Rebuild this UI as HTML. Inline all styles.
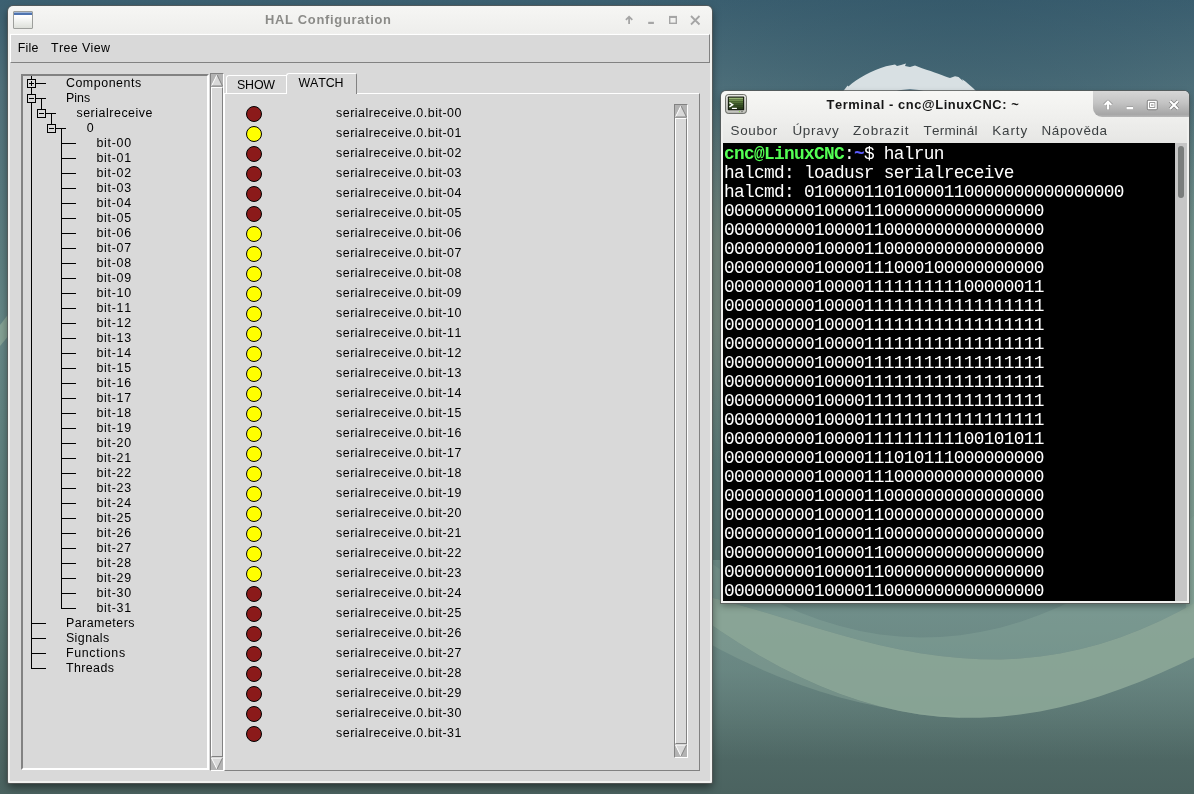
<!DOCTYPE html><html><head><meta charset="utf-8"><title>HAL</title><style>
*{box-sizing:border-box;margin:0;padding:0}
html,body{width:1194px;height:794px;overflow:hidden;background:#4a6a72}
body{position:relative;font-family:"Liberation Sans",sans-serif;}
.abs{position:absolute}
#bg{position:absolute;left:0;top:0}
#hal{position:absolute;left:8px;top:6px;width:704px;height:777px;background:linear-gradient(#f6f6f4,#eeeeec 27px,#f1f1ef 28px);border-radius:5px 5px 1px 1px;box-shadow:0 0 0 1px rgba(88,90,88,.78),0 4px 9px 0 rgba(0,0,0,.5)}
#halc{position:absolute;left:2px;top:28px;width:700px;height:747px;background:#d9d9d9}
.t{position:absolute;white-space:pre;color:#000;font-size:12.4px;letter-spacing:.55px;line-height:15px;height:15px}
.tx{position:absolute;white-space:pre;line-height:20px;height:20px;font-kerning:none}
#hal,#term{will-change:transform}
.hl{position:absolute;height:1px;background:#000}
.vl{position:absolute;width:1px;background:#000}
.bx{position:absolute;width:9px;height:9px;border:1px solid #000;background:#d9d9d9}
.bx i{position:absolute;left:1px;top:3px;width:5px;height:1px;background:#000}
.bx b{position:absolute;left:3px;top:1px;width:1px;height:5px;background:#000}
.c{position:absolute;width:16px;height:16px;border-radius:50%;border:1.6px solid #000}
.r{background:#8b1a1a}.y{background:#ffff00}
#term{position:absolute;left:721px;top:91px;width:468px;height:512px;background:linear-gradient(#f7f7f5,#efefed 27px,#f1f1ef 28px);border-radius:5px 5px 0 0;box-shadow:0 0 0 1px rgba(88,90,88,.78),0 3px 7px 0 rgba(0,0,0,.35)}
#tt{position:absolute;left:2px;top:52px;width:452px;height:458px;background:#000;overflow:hidden}
.ln{position:absolute;left:1px;white-space:pre;color:#fff;font-family:"Liberation Mono",monospace;font-size:17.8px;letter-spacing:-.68px;line-height:19px;height:19px}
.g{color:#54ff54;font-weight:bold}.bl{color:#5c5cff;font-weight:bold}
.m{position:absolute;top:31px;white-space:pre;color:#3c3c3c;font-size:13.6px;letter-spacing:.45px;line-height:16px}
</style></head><body>
<svg id="bg" width="1194" height="794" viewBox="0 0 1194 794"><defs><linearGradient id="g0" x1="0" y1="0" x2="0" y2="1"><stop offset="0" stop-color="#3c6071"/><stop offset=".11" stop-color="#51727c"/><stop offset=".33" stop-color="#5d8081"/><stop offset=".42" stop-color="#668887"/><stop offset=".52" stop-color="#628482"/><stop offset=".76" stop-color="#5b7975"/><stop offset="1" stop-color="#4b6360"/></linearGradient><linearGradient id="g2" x1="0" y1="0" x2="0" y2="1"><stop offset="0" stop-color="#7f8f82" stop-opacity="0"/><stop offset=".4" stop-color="#7f8f82" stop-opacity=".8"/><stop offset=".62" stop-color="#7f8f82" stop-opacity=".8"/><stop offset="1" stop-color="#7f8f82" stop-opacity="0"/></linearGradient><linearGradient id="g4" x1="0" y1="0" x2="0" y2="1"><stop offset="0" stop-color="#86a396" stop-opacity="0"/><stop offset=".3" stop-color="#86a396" stop-opacity=".6"/><stop offset="1" stop-color="#86a396" stop-opacity=".85"/></linearGradient><linearGradient id="g3" x1="0" y1="0" x2="0" y2="1"><stop offset="0" stop-color="#7c9b96" stop-opacity=".75"/><stop offset=".55" stop-color="#7c9b96" stop-opacity=".5"/><stop offset="1" stop-color="#7c9b96" stop-opacity="0"/></linearGradient><radialGradient id="g1" cx="960" cy="-30" r="340" gradientUnits="userSpaceOnUse"><stop offset="0" stop-color="#2f5365" stop-opacity=".5"/><stop offset=".5" stop-color="#2f5365" stop-opacity=".28"/><stop offset="1" stop-color="#2f5365" stop-opacity="0"/></radialGradient></defs><rect width="1194" height="794" fill="url(#g0)"/><rect width="1194" height="420" fill="url(#g1)"/><rect x="712" y="100" width="10" height="360" fill="url(#g2)"/><rect x="712" y="560" width="482" height="200" fill="url(#g3)"/><rect x="1186" y="90" width="8" height="520" fill="url(#g4)"/>
<path d="M842.6 92 L847.6 85.6 L848.4 86.4 C858 78 872 70.5 886 66.2 L895 64.6 L897 66 L901 65 L906 63.6 L905 66 L910 67 L915 65.6 L922 68.2 C934 72 944 76 950 78 L955 76.2 L958.5 77 L963 81 L962 79 C967 82.5 972 87 977 92 Z" fill="#d8e0e3"/><path d="M892 92 Q910 86.5 928 92 Z" fill="#44687a"/>
<path d="M560.0 591.4 L580.0 587.1 L600.0 584.7 L620.0 584.1 L640.0 585.0 L660.0 587.2 L680.0 590.6 L700.0 594.8 L720.0 599.7 L740.0 605.2 L760.0 611.0 L780.0 617.0 L800.0 623.1 L820.0 629.1 L840.0 634.8 L860.0 640.2 L880.0 645.2 L900.0 649.5 L920.0 653.2 L940.0 656.1 L960.0 658.1 L980.0 659.3 L1000.0 659.4 L1020.0 658.6 L1040.0 656.6 L1060.0 653.5 L1080.0 649.3 L1100.0 644.0 L1120.0 637.5 L1140.0 629.8 L1160.0 621.0 L1180.0 611.1 L1200.0 600.0 L1220.0 587.9 L1240.0 574.8 L1240.0 471.1 L1220.0 491.4 L1200.0 510.4 L1180.0 528.1 L1160.0 544.5 L1140.0 559.5 L1120.0 573.2 L1100.0 585.6 L1080.0 596.7 L1060.0 606.4 L1040.0 614.8 L1020.0 621.9 L1000.0 627.7 L980.0 632.1 L960.0 635.2 L940.0 637.0 L920.0 637.5 L900.0 636.6 L880.0 634.5 L860.0 631.0 L840.0 626.1 L820.0 620.0 L800.0 612.5 L780.0 603.7 L760.0 593.6 L740.0 582.1 L720.0 569.3 L700.0 555.3 L680.0 539.8 L660.0 523.1 L640.0 505.0 L620.0 485.6 L600.0 464.9 L580.0 442.8 L560.0 419.5 Z" fill="#86a399" opacity=".45"/>
<path d="M560.0 539.2 L580.0 555.9 L600.0 571.7 L620.0 586.8 L640.0 601.0 L660.0 614.4 L680.0 626.9 L700.0 638.6 L720.0 649.5 L740.0 659.6 L760.0 668.8 L780.0 677.2 L800.0 684.8 L820.0 691.5 L840.0 697.5 L860.0 702.5 L880.0 706.8 L900.0 710.2 L920.0 712.8 L940.0 714.6 L960.0 715.5 L960.0 717.8 L940.0 716.7 L920.0 714.4 L900.0 711.0 L880.0 706.5 L860.0 700.8 L840.0 694.0 L820.0 686.1 L800.0 677.1 L780.0 667.0 L760.0 655.9 L740.0 643.8 L720.0 630.7 L700.0 616.7 L680.0 601.8 L660.0 586.1 L640.0 569.7 L620.0 552.6 L600.0 534.9 L580.0 516.6 L560.0 497.9 Z" fill="#86a295" opacity=".5"/>
<path d="M560.0 497.9 L580.0 516.6 L600.0 534.9 L620.0 552.6 L640.0 569.7 L660.0 586.1 L680.0 601.8 L700.0 616.7 L720.0 630.7 L740.0 643.8 L760.0 655.9 L780.0 667.0 L800.0 677.1 L820.0 686.1 L840.0 694.0 L860.0 700.8 L880.0 706.5 L900.0 711.0 L920.0 714.4 L940.0 716.7 L960.0 717.8 L980.0 717.8 L1000.0 716.8 L1020.0 714.6 L1040.0 711.5 L1060.0 707.3 L1080.0 702.2 L1100.0 696.2 L1120.0 689.3 L1140.0 681.7 L1160.0 673.3 L1180.0 664.2 L1200.0 654.6 L1220.0 644.4 L1240.0 633.9 L1240.0 574.8 L1220.0 587.9 L1200.0 600.0 L1180.0 611.1 L1160.0 621.0 L1140.0 629.8 L1120.0 637.5 L1100.0 644.0 L1080.0 649.3 L1060.0 653.5 L1040.0 656.6 L1020.0 658.6 L1000.0 659.4 L980.0 659.3 L960.0 658.1 L940.0 656.1 L920.0 653.2 L900.0 649.5 L880.0 645.2 L860.0 640.2 L840.0 634.8 L820.0 629.1 L800.0 623.1 L780.0 617.0 L760.0 611.0 L740.0 605.2 L720.0 599.7 L700.0 594.8 L680.0 590.6 L660.0 587.2 L640.0 585.0 L620.0 584.1 L600.0 584.7 L580.0 587.1 L560.0 591.4 Z" fill="#8ba697" opacity=".92"/>
<path d="M0 325 L10 312 L10 334 L0 346 Z" fill="#8ba898" opacity=".85"/>
</svg>
<div id="hal">
<div class="abs" style="left:5px;top:5px;width:20px;height:18px;border:1px solid #9d9f9c;border-radius:1px;background:linear-gradient(#fff 25%,#dde0da)"><div class="abs" style="left:0;top:0;width:18px;height:3px;background:linear-gradient(#9db4d6 0,#9db4d6 30%,#4f74b0 35%,#4f74b0)"></div></div>
<div class="tx" style="left:256.9px;top:3.53px;font-size:12.9px;letter-spacing:0.717px;color:#8b8b88;font-weight:bold;">HAL Configuration</div>
<svg class="abs" style="left:612px;top:6px" width="86" height="16" viewBox="0 0 86 16">
<g stroke="#a5a5a5" stroke-width="1.8" fill="none">
<path d="M9.1 12V5M5.9 7.9L9.1 4.7L12.3 7.9"/>
<path d="M28.2 10.9h5.7" stroke-width="2.2"/>
<rect x="49.7" y="5" width="6.6" height="6.3" stroke-width="1.4"/><path d="M49 4.9h8" stroke-width="2"/>
<path d="M71 4l8.5 8.5M79.5 4L71 12.5"/>
</g></svg>
<div id="halc">
<div class="abs" style="left:0;top:0;width:700px;height:29px;border-right:1px solid #828282;border-bottom:1px solid #828282;border-left:1px solid #fff;border-top:1px solid #fff"></div>
<div class="tx" style="left:7.8px;top:3.70px;font-size:12.42px;letter-spacing:0.235px;color:#000;">File</div>
<div class="tx" style="left:40.9px;top:3.70px;font-size:12.42px;letter-spacing:0.409px;color:#000;">Tree View</div>
<div class="abs" style="left:11px;top:40px;width:188px;height:696px;border:2px solid;border-color:#828282 #ffffff #ffffff #828282"></div>
<div class="vl" style="left:21px;top:42px;height:593px"></div>
<div class="vl" style="left:31px;top:64px;height:15px"></div>
<div class="vl" style="left:41px;top:79px;height:15px"></div>
<div class="vl" style="left:51px;top:94px;height:481px"></div>
<div class="hl" style="left:21px;top:49px;width:15px"></div>
<div class="bx" style="left:17px;top:45px"><i></i><b></b></div>
<div class="tx" style="left:55.9px;top:38.70px;font-size:12.42px;letter-spacing:0.55px;color:#000;">Components</div>
<div class="hl" style="left:21px;top:64px;width:15px"></div>
<div class="bx" style="left:17px;top:60px"><i></i></div>
<div class="tx" style="left:55.9px;top:53.70px;font-size:12.42px;letter-spacing:0.069px;color:#000;">Pins</div>
<div class="hl" style="left:31px;top:79px;width:15px"></div>
<div class="bx" style="left:27px;top:75px"><i></i></div>
<div class="tx" style="left:66.4px;top:68.70px;font-size:12.42px;letter-spacing:0.539px;color:#000;">serialreceive</div>
<div class="hl" style="left:41px;top:94px;width:15px"></div>
<div class="bx" style="left:37px;top:90px"><i></i></div>
<div class="tx" style="left:76.8px;top:83.70px;font-size:12.42px;letter-spacing:0.732px;color:#000;">0</div>
<div class="hl" style="left:51px;top:109px;width:15px"></div>
<div class="tx" style="left:86.5px;top:98.70px;font-size:12.42px;letter-spacing:0.699px;color:#000;">bit-00</div>
<div class="hl" style="left:51px;top:124px;width:15px"></div>
<div class="tx" style="left:86.5px;top:113.70px;font-size:12.42px;letter-spacing:0.699px;color:#000;">bit-01</div>
<div class="hl" style="left:51px;top:139px;width:15px"></div>
<div class="tx" style="left:86.5px;top:128.70px;font-size:12.42px;letter-spacing:0.699px;color:#000;">bit-02</div>
<div class="hl" style="left:51px;top:154px;width:15px"></div>
<div class="tx" style="left:86.5px;top:143.70px;font-size:12.42px;letter-spacing:0.699px;color:#000;">bit-03</div>
<div class="hl" style="left:51px;top:169px;width:15px"></div>
<div class="tx" style="left:86.5px;top:158.70px;font-size:12.42px;letter-spacing:0.699px;color:#000;">bit-04</div>
<div class="hl" style="left:51px;top:184px;width:15px"></div>
<div class="tx" style="left:86.5px;top:173.70px;font-size:12.42px;letter-spacing:0.699px;color:#000;">bit-05</div>
<div class="hl" style="left:51px;top:199px;width:15px"></div>
<div class="tx" style="left:86.5px;top:188.70px;font-size:12.42px;letter-spacing:0.699px;color:#000;">bit-06</div>
<div class="hl" style="left:51px;top:214px;width:15px"></div>
<div class="tx" style="left:86.5px;top:203.70px;font-size:12.42px;letter-spacing:0.699px;color:#000;">bit-07</div>
<div class="hl" style="left:51px;top:229px;width:15px"></div>
<div class="tx" style="left:86.5px;top:218.70px;font-size:12.42px;letter-spacing:0.699px;color:#000;">bit-08</div>
<div class="hl" style="left:51px;top:244px;width:15px"></div>
<div class="tx" style="left:86.5px;top:233.70px;font-size:12.42px;letter-spacing:0.699px;color:#000;">bit-09</div>
<div class="hl" style="left:51px;top:259px;width:15px"></div>
<div class="tx" style="left:86.5px;top:248.70px;font-size:12.42px;letter-spacing:0.699px;color:#000;">bit-10</div>
<div class="hl" style="left:51px;top:274px;width:15px"></div>
<div class="tx" style="left:86.5px;top:263.70px;font-size:12.42px;letter-spacing:0.699px;color:#000;">bit-11</div>
<div class="hl" style="left:51px;top:289px;width:15px"></div>
<div class="tx" style="left:86.5px;top:278.70px;font-size:12.42px;letter-spacing:0.699px;color:#000;">bit-12</div>
<div class="hl" style="left:51px;top:304px;width:15px"></div>
<div class="tx" style="left:86.5px;top:293.70px;font-size:12.42px;letter-spacing:0.699px;color:#000;">bit-13</div>
<div class="hl" style="left:51px;top:319px;width:15px"></div>
<div class="tx" style="left:86.5px;top:308.70px;font-size:12.42px;letter-spacing:0.699px;color:#000;">bit-14</div>
<div class="hl" style="left:51px;top:334px;width:15px"></div>
<div class="tx" style="left:86.5px;top:323.70px;font-size:12.42px;letter-spacing:0.699px;color:#000;">bit-15</div>
<div class="hl" style="left:51px;top:349px;width:15px"></div>
<div class="tx" style="left:86.5px;top:338.70px;font-size:12.42px;letter-spacing:0.699px;color:#000;">bit-16</div>
<div class="hl" style="left:51px;top:364px;width:15px"></div>
<div class="tx" style="left:86.5px;top:353.70px;font-size:12.42px;letter-spacing:0.699px;color:#000;">bit-17</div>
<div class="hl" style="left:51px;top:379px;width:15px"></div>
<div class="tx" style="left:86.5px;top:368.70px;font-size:12.42px;letter-spacing:0.699px;color:#000;">bit-18</div>
<div class="hl" style="left:51px;top:394px;width:15px"></div>
<div class="tx" style="left:86.5px;top:383.70px;font-size:12.42px;letter-spacing:0.699px;color:#000;">bit-19</div>
<div class="hl" style="left:51px;top:409px;width:15px"></div>
<div class="tx" style="left:86.5px;top:398.70px;font-size:12.42px;letter-spacing:0.699px;color:#000;">bit-20</div>
<div class="hl" style="left:51px;top:424px;width:15px"></div>
<div class="tx" style="left:86.5px;top:413.70px;font-size:12.42px;letter-spacing:0.699px;color:#000;">bit-21</div>
<div class="hl" style="left:51px;top:439px;width:15px"></div>
<div class="tx" style="left:86.5px;top:428.70px;font-size:12.42px;letter-spacing:0.699px;color:#000;">bit-22</div>
<div class="hl" style="left:51px;top:454px;width:15px"></div>
<div class="tx" style="left:86.5px;top:443.70px;font-size:12.42px;letter-spacing:0.699px;color:#000;">bit-23</div>
<div class="hl" style="left:51px;top:469px;width:15px"></div>
<div class="tx" style="left:86.5px;top:458.70px;font-size:12.42px;letter-spacing:0.699px;color:#000;">bit-24</div>
<div class="hl" style="left:51px;top:484px;width:15px"></div>
<div class="tx" style="left:86.5px;top:473.70px;font-size:12.42px;letter-spacing:0.699px;color:#000;">bit-25</div>
<div class="hl" style="left:51px;top:499px;width:15px"></div>
<div class="tx" style="left:86.5px;top:488.70px;font-size:12.42px;letter-spacing:0.699px;color:#000;">bit-26</div>
<div class="hl" style="left:51px;top:514px;width:15px"></div>
<div class="tx" style="left:86.5px;top:503.70px;font-size:12.42px;letter-spacing:0.699px;color:#000;">bit-27</div>
<div class="hl" style="left:51px;top:529px;width:15px"></div>
<div class="tx" style="left:86.5px;top:518.70px;font-size:12.42px;letter-spacing:0.699px;color:#000;">bit-28</div>
<div class="hl" style="left:51px;top:544px;width:15px"></div>
<div class="tx" style="left:86.5px;top:533.70px;font-size:12.42px;letter-spacing:0.699px;color:#000;">bit-29</div>
<div class="hl" style="left:51px;top:559px;width:15px"></div>
<div class="tx" style="left:86.5px;top:548.70px;font-size:12.42px;letter-spacing:0.699px;color:#000;">bit-30</div>
<div class="hl" style="left:51px;top:574px;width:15px"></div>
<div class="tx" style="left:86.5px;top:563.70px;font-size:12.42px;letter-spacing:0.699px;color:#000;">bit-31</div>
<div class="hl" style="left:21px;top:589px;width:15px"></div>
<div class="tx" style="left:55.9px;top:578.70px;font-size:12.42px;letter-spacing:0.504px;color:#000;">Parameters</div>
<div class="hl" style="left:21px;top:604px;width:15px"></div>
<div class="tx" style="left:55.9px;top:593.70px;font-size:12.42px;letter-spacing:0.441px;color:#000;">Signals</div>
<div class="hl" style="left:21px;top:619px;width:15px"></div>
<div class="tx" style="left:55.9px;top:608.70px;font-size:12.42px;letter-spacing:0.679px;color:#000;">Functions</div>
<div class="hl" style="left:21px;top:634px;width:15px"></div>
<div class="tx" style="left:55.9px;top:623.70px;font-size:12.42px;letter-spacing:0.417px;color:#000;">Threads</div>
<div class="abs" style="left:200px;top:39px;width:14px;height:698px;background:#b3b3b3;border:1px solid;border-color:#828282 #ffffff #ffffff #828282"><div class="abs" style="left:0;top:13px;width:12px;height:670px;background:#d9d9d9;border:1px solid;border-color:#ffffff #828282 #828282 #ffffff"></div><svg class="abs" style="left:0;top:0" width="12" height="13" viewBox="0 0 12 13"><path d="M6 0.5L11.5 12H0.5Z" fill="#d9d9d9"/><path d="M6 0.8L0.5 12" stroke="#fff" stroke-width="1" fill="none"/><path d="M6 0.8L11.5 12H0.5" stroke="#828282" stroke-width="1" fill="none"/></svg><svg class="abs" style="left:0;bottom:0" width="12" height="13" viewBox="0 0 12 13"><path d="M6 12.5L11.5 1H0.5Z" fill="#d9d9d9"/><path d="M6 12.2L0.5 1H11.5" stroke="#fff" stroke-width="1" fill="none"/><path d="M6 12.2L11.5 1" stroke="#828282" stroke-width="1" fill="none"/></svg></div>
<div class="abs" style="left:664px;top:70px;width:14px;height:654px;background:#b3b3b3;border:1px solid;border-color:#828282 #ffffff #ffffff #828282"><div class="abs" style="left:0;top:13px;width:12px;height:626px;background:#d9d9d9;border:1px solid;border-color:#ffffff #828282 #828282 #ffffff"></div><svg class="abs" style="left:0;top:0" width="12" height="13" viewBox="0 0 12 13"><path d="M6 0.5L11.5 12H0.5Z" fill="#d9d9d9"/><path d="M6 0.8L0.5 12" stroke="#fff" stroke-width="1" fill="none"/><path d="M6 0.8L11.5 12H0.5" stroke="#828282" stroke-width="1" fill="none"/></svg><svg class="abs" style="left:0;bottom:0" width="12" height="13" viewBox="0 0 12 13"><path d="M6 12.5L11.5 1H0.5Z" fill="#d9d9d9"/><path d="M6 12.2L0.5 1H11.5" stroke="#fff" stroke-width="1" fill="none"/><path d="M6 12.2L11.5 1" stroke="#828282" stroke-width="1" fill="none"/></svg></div>
<div class="abs" style="left:214px;top:59px;width:476px;height:678px;border:1px solid;border-color:#ffffff #828282 #828282 #ffffff"></div>
<div class="abs" style="left:216px;top:41px;width:61px;height:18px;border:1px solid #fff;border-bottom:none;border-right:none;border-radius:3px 0 0 0"></div>
<div class="abs" style="left:276px;top:39px;width:71px;height:21px;background:#d9d9d9;border:1px solid;border-color:#fff #828282 #d9d9d9 #fff;border-bottom:none;border-right-width:1px;border-radius:3px 2px 0 0"></div>
<div class="tx" style="left:227.0px;top:40.70px;font-size:12.42px;letter-spacing:-0.171px;color:#000;">SHOW</div>
<div class="tx" style="left:288.5px;top:38.70px;font-size:12.42px;letter-spacing:-0.144px;color:#000;">WATCH</div>
<div class="c r" style="left:236px;top:72px"></div>
<div class="tx" style="left:326.0px;top:68.70px;font-size:12.42px;letter-spacing:0.52px;color:#000;">serialreceive.0.bit-00</div>
<div class="c y" style="left:236px;top:92px"></div>
<div class="tx" style="left:326.0px;top:88.70px;font-size:12.42px;letter-spacing:0.52px;color:#000;">serialreceive.0.bit-01</div>
<div class="c r" style="left:236px;top:112px"></div>
<div class="tx" style="left:326.0px;top:108.70px;font-size:12.42px;letter-spacing:0.52px;color:#000;">serialreceive.0.bit-02</div>
<div class="c r" style="left:236px;top:132px"></div>
<div class="tx" style="left:326.0px;top:128.70px;font-size:12.42px;letter-spacing:0.52px;color:#000;">serialreceive.0.bit-03</div>
<div class="c r" style="left:236px;top:152px"></div>
<div class="tx" style="left:326.0px;top:148.70px;font-size:12.42px;letter-spacing:0.52px;color:#000;">serialreceive.0.bit-04</div>
<div class="c r" style="left:236px;top:172px"></div>
<div class="tx" style="left:326.0px;top:168.70px;font-size:12.42px;letter-spacing:0.52px;color:#000;">serialreceive.0.bit-05</div>
<div class="c y" style="left:236px;top:192px"></div>
<div class="tx" style="left:326.0px;top:188.70px;font-size:12.42px;letter-spacing:0.52px;color:#000;">serialreceive.0.bit-06</div>
<div class="c y" style="left:236px;top:212px"></div>
<div class="tx" style="left:326.0px;top:208.70px;font-size:12.42px;letter-spacing:0.52px;color:#000;">serialreceive.0.bit-07</div>
<div class="c y" style="left:236px;top:232px"></div>
<div class="tx" style="left:326.0px;top:228.70px;font-size:12.42px;letter-spacing:0.52px;color:#000;">serialreceive.0.bit-08</div>
<div class="c y" style="left:236px;top:252px"></div>
<div class="tx" style="left:326.0px;top:248.70px;font-size:12.42px;letter-spacing:0.52px;color:#000;">serialreceive.0.bit-09</div>
<div class="c y" style="left:236px;top:272px"></div>
<div class="tx" style="left:326.0px;top:268.70px;font-size:12.42px;letter-spacing:0.52px;color:#000;">serialreceive.0.bit-10</div>
<div class="c y" style="left:236px;top:292px"></div>
<div class="tx" style="left:326.0px;top:288.70px;font-size:12.42px;letter-spacing:0.52px;color:#000;">serialreceive.0.bit-11</div>
<div class="c y" style="left:236px;top:312px"></div>
<div class="tx" style="left:326.0px;top:308.70px;font-size:12.42px;letter-spacing:0.52px;color:#000;">serialreceive.0.bit-12</div>
<div class="c y" style="left:236px;top:332px"></div>
<div class="tx" style="left:326.0px;top:328.70px;font-size:12.42px;letter-spacing:0.52px;color:#000;">serialreceive.0.bit-13</div>
<div class="c y" style="left:236px;top:352px"></div>
<div class="tx" style="left:326.0px;top:348.70px;font-size:12.42px;letter-spacing:0.52px;color:#000;">serialreceive.0.bit-14</div>
<div class="c y" style="left:236px;top:372px"></div>
<div class="tx" style="left:326.0px;top:368.70px;font-size:12.42px;letter-spacing:0.52px;color:#000;">serialreceive.0.bit-15</div>
<div class="c y" style="left:236px;top:392px"></div>
<div class="tx" style="left:326.0px;top:388.70px;font-size:12.42px;letter-spacing:0.52px;color:#000;">serialreceive.0.bit-16</div>
<div class="c y" style="left:236px;top:412px"></div>
<div class="tx" style="left:326.0px;top:408.70px;font-size:12.42px;letter-spacing:0.52px;color:#000;">serialreceive.0.bit-17</div>
<div class="c y" style="left:236px;top:432px"></div>
<div class="tx" style="left:326.0px;top:428.70px;font-size:12.42px;letter-spacing:0.52px;color:#000;">serialreceive.0.bit-18</div>
<div class="c y" style="left:236px;top:452px"></div>
<div class="tx" style="left:326.0px;top:448.70px;font-size:12.42px;letter-spacing:0.52px;color:#000;">serialreceive.0.bit-19</div>
<div class="c y" style="left:236px;top:472px"></div>
<div class="tx" style="left:326.0px;top:468.70px;font-size:12.42px;letter-spacing:0.52px;color:#000;">serialreceive.0.bit-20</div>
<div class="c y" style="left:236px;top:492px"></div>
<div class="tx" style="left:326.0px;top:488.70px;font-size:12.42px;letter-spacing:0.52px;color:#000;">serialreceive.0.bit-21</div>
<div class="c y" style="left:236px;top:512px"></div>
<div class="tx" style="left:326.0px;top:508.70px;font-size:12.42px;letter-spacing:0.52px;color:#000;">serialreceive.0.bit-22</div>
<div class="c y" style="left:236px;top:532px"></div>
<div class="tx" style="left:326.0px;top:528.70px;font-size:12.42px;letter-spacing:0.52px;color:#000;">serialreceive.0.bit-23</div>
<div class="c r" style="left:236px;top:552px"></div>
<div class="tx" style="left:326.0px;top:548.70px;font-size:12.42px;letter-spacing:0.52px;color:#000;">serialreceive.0.bit-24</div>
<div class="c r" style="left:236px;top:572px"></div>
<div class="tx" style="left:326.0px;top:568.70px;font-size:12.42px;letter-spacing:0.52px;color:#000;">serialreceive.0.bit-25</div>
<div class="c r" style="left:236px;top:592px"></div>
<div class="tx" style="left:326.0px;top:588.70px;font-size:12.42px;letter-spacing:0.52px;color:#000;">serialreceive.0.bit-26</div>
<div class="c r" style="left:236px;top:612px"></div>
<div class="tx" style="left:326.0px;top:608.70px;font-size:12.42px;letter-spacing:0.52px;color:#000;">serialreceive.0.bit-27</div>
<div class="c r" style="left:236px;top:632px"></div>
<div class="tx" style="left:326.0px;top:628.70px;font-size:12.42px;letter-spacing:0.52px;color:#000;">serialreceive.0.bit-28</div>
<div class="c r" style="left:236px;top:652px"></div>
<div class="tx" style="left:326.0px;top:648.70px;font-size:12.42px;letter-spacing:0.52px;color:#000;">serialreceive.0.bit-29</div>
<div class="c r" style="left:236px;top:672px"></div>
<div class="tx" style="left:326.0px;top:668.70px;font-size:12.42px;letter-spacing:0.52px;color:#000;">serialreceive.0.bit-30</div>
<div class="c r" style="left:236px;top:692px"></div>
<div class="tx" style="left:326.0px;top:688.70px;font-size:12.42px;letter-spacing:0.52px;color:#000;">serialreceive.0.bit-31</div>
</div></div>
<div id="term">
<div class="abs" style="left:372px;top:0;width:96px;height:26px;border-radius:0 5px 0 9px;background:linear-gradient(#d6d6d6,#c4c4c4 45%,#a6a6a6 90%,#b8b8b8)"></div>
<svg class="abs" style="left:376px;top:4px" width="90" height="20" viewBox="0 0 90 20">
<g stroke="#6a6a6a" stroke-width="3.4" fill="none" stroke-linejoin="round" opacity=".8">
<path d="M11 14.5V8M7.6 10L11 6.6L14.4 10"/><path d="M29.5 13.2h6.5"/><rect x="51.5" y="6.5" width="7.5" height="7"/><path d="M73 6l8 8M81 6l-8 8"/></g>
<g stroke="#fff" stroke-width="2" fill="none">
<path d="M11 14.5V8" stroke-width="2.6"/><path d="M7.6 10L11 6.6L14.4 10" stroke-width="2.2"/><path d="M29.5 13.2h6.5" stroke-width="2.6"/><rect x="51.5" y="6.5" width="7.5" height="7" stroke-width="1.5"/><rect x="53.5" y="8.5" width="3.5" height="3" stroke-width="1"/><path d="M73 6l8 8M81 6l-8 8" stroke-width="2.2"/></g>
</svg>
<svg class="abs" style="left:4px;top:3px" width="22" height="20" viewBox="0 0 22 20">
<defs><linearGradient id="ti1" x1="0" y1="0" x2="0" y2="1"><stop offset="0" stop-color="#f4f4f0"/><stop offset="1" stop-color="#bfc0ba"/></linearGradient>
<linearGradient id="ti2" x1="0" y1="0" x2="0" y2="1"><stop offset="0" stop-color="#a9c486"/><stop offset=".3" stop-color="#668646"/><stop offset=".6" stop-color="#3f5a2b"/><stop offset="1" stop-color="#253818"/></linearGradient></defs>
<rect x=".6" y=".6" width="20.8" height="18.8" rx="2.6" fill="url(#ti1)" stroke="#5d5f59" stroke-width=".95"/>
<rect x="2.8" y="2.6" width="16.4" height="13.6" rx=".6" fill="#141a0e"/>
<rect x="3.9" y="3.7" width="14.2" height="11.4" fill="url(#ti2)"/>
<path d="M3.9 5.6h14.2M3.9 7.6h14.2M3.9 9.6h14.2M3.9 11.6h14.2M3.9 13.6h14.2" stroke="#20300f" stroke-width=".7" opacity=".55"/>
<path d="M4.4 8.6l3.3 2.1l-3.3 2.1" stroke="#fff" stroke-width="1.4" fill="none"/><path d="M6.9 14.4h5" stroke="#fff" stroke-width="1.2"/>
<rect x="13.9" y="17.1" width="1.1" height="1.1" fill="#8be04a"/><path d="M16 17.6h2" stroke="#70726c" stroke-width=".8"/>
</svg>
<div class="tx" style="left:105.5px;top:3.53px;font-size:12.9px;letter-spacing:0.585px;color:#161616;font-weight:bold;">Terminal - cnc@LinuxCNC: ~</div>
<div class="abs" style="left:2px;top:27px;width:464px;height:25px;background:linear-gradient(#efefed,#e6e6e4)"></div>
<div class="tx" style="left:9.6px;top:30.34px;font-size:13.45px;letter-spacing:0.638px;color:#3b3f41;">Soubor</div>
<div class="tx" style="left:71.4px;top:30.34px;font-size:13.45px;letter-spacing:0.744px;color:#3b3f41;">Úpravy</div>
<div class="tx" style="left:132.0px;top:30.34px;font-size:13.45px;letter-spacing:0.998px;color:#3b3f41;">Zobrazit</div>
<div class="tx" style="left:202.6px;top:30.34px;font-size:13.45px;letter-spacing:0.234px;color:#3b3f41;">Terminál</div>
<div class="tx" style="left:271.2px;top:30.34px;font-size:13.45px;letter-spacing:0.889px;color:#3b3f41;">Karty</div>
<div class="tx" style="left:320.5px;top:30.34px;font-size:13.45px;letter-spacing:0.611px;color:#3b3f41;">Nápověda</div>
<div id="tt">
<div class="ln" style="top:2px"><span class="g">cnc@LinuxCNC</span>:<span class="bl">~</span>$ halrun</div>
<div class="ln" style="top:21px">halcmd: loadusr serialreceive</div>
<div class="ln" style="top:40px">halcmd: 01000011010000110000000000000000</div>
<div class="ln" style="top:59px">00000000010000110000000000000000</div>
<div class="ln" style="top:78px">00000000010000110000000000000000</div>
<div class="ln" style="top:97px">00000000010000110000000000000000</div>
<div class="ln" style="top:116px">00000000010000111000100000000000</div>
<div class="ln" style="top:135px">00000000010000111111111100000011</div>
<div class="ln" style="top:154px">00000000010000111111111111111111</div>
<div class="ln" style="top:173px">00000000010000111111111111111111</div>
<div class="ln" style="top:192px">00000000010000111111111111111111</div>
<div class="ln" style="top:211px">00000000010000111111111111111111</div>
<div class="ln" style="top:230px">00000000010000111111111111111111</div>
<div class="ln" style="top:249px">00000000010000111111111111111111</div>
<div class="ln" style="top:268px">00000000010000111111111111111111</div>
<div class="ln" style="top:287px">00000000010000111111111100101011</div>
<div class="ln" style="top:306px">00000000010000111010111000000000</div>
<div class="ln" style="top:325px">00000000010000111000000000000000</div>
<div class="ln" style="top:344px">00000000010000110000000000000000</div>
<div class="ln" style="top:363px">00000000010000110000000000000000</div>
<div class="ln" style="top:382px">00000000010000110000000000000000</div>
<div class="ln" style="top:401px">00000000010000110000000000000000</div>
<div class="ln" style="top:420px">00000000010000110000000000000000</div>
<div class="ln" style="top:439px">00000000010000110000000000000000</div>
</div>
<div class="abs" style="left:454px;top:52px;width:12px;height:458px;background:#c6c6c6"><div class="abs" style="left:3px;top:3px;width:6px;height:52px;border-radius:3px;background:#7a7d7c"></div></div>
</div>
</body></html>
